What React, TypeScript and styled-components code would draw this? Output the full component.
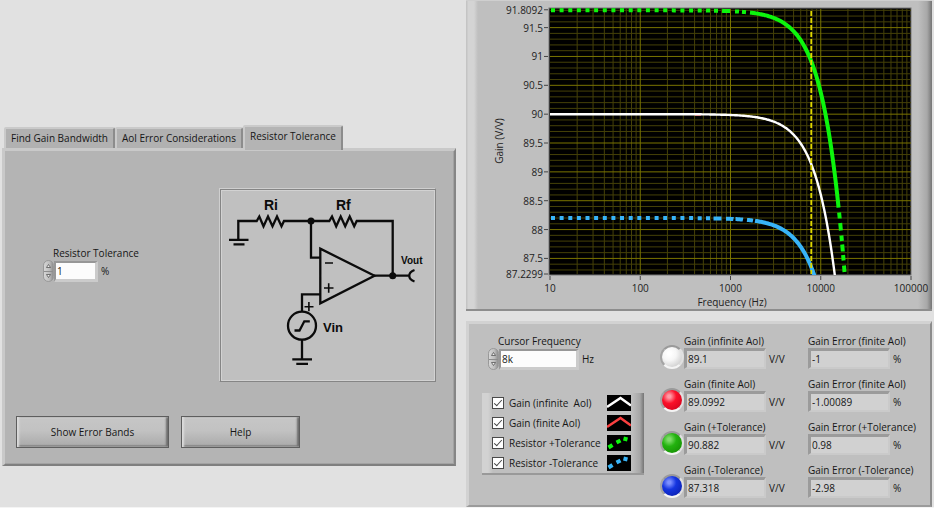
import React, { useState } from 'react';
import styled, { createGlobalStyle, css } from 'styled-components';

const FONT = '"Open Sans", "Noto Sans", sans-serif';

const GlobalStyle = createGlobalStyle`
  *, *::before, *::after { box-sizing: border-box; }
  body { margin: 0; background: #e1e1e1; }
  body, button, input { font: 10px/14px ${FONT}; color: #161616; }
  svg { display: block; }
`;

const Page = styled.main`
  display: grid;
  grid-template-columns: minmax(0, 454fr) minmax(0, 466fr);
  column-gap: 10px;
  padding: 0 2px;
  border-bottom: 1px solid #f4f4f4;
`;

const LeftColumn = styled.section`
  display: flex;
  flex-direction: column;
  padding-top: 125px;
`;

const RightColumn = styled.section`
  display: flex;
  flex-direction: column;
  gap: 10px;
`;

/* ---------- tab control ---------- */

const TabList = styled.div`
  display: flex;
  align-items: flex-end;
  padding-left: 2px;
`;

const Tab = styled.button<{ $active: boolean }>`
  height: 21px;
  padding: 0 5px 2px;
  white-space: nowrap;
  border: solid;
  border-width: 2px 2px 0 2px;
  border-color: #cacaca #8c8c8c transparent #cacaca;
  border-radius: 2px 2px 0 0;
  background: #b1b1b1;
  ${(p) =>
    p.$active &&
    css`
      height: 25px;
      margin-bottom: -2px;
      padding-bottom: 5px;
      background: #b4b4b4;
      position: relative;
    `}
`;

const TabPanel = styled.div`
  display: flex;
  flex-direction: column;
  gap: 34px;
  padding: 37px 18px 16px 11px;
  background: #b4b4b4;
  border: solid;
  border-width: 3px 2px 2px 3px;
  border-color: #c9c9c9 #868686 #7f7f7f #c9c9c9;
  box-shadow: inset -1px -1px 0 #a2a2a2;
`;

const PanelBody = styled.div`
  display: flex;
  justify-content: space-between;
`;

const ToleranceField = styled.div`
  padding: 58px 0 0 27px;
`;

const ButtonRow = styled.div`
  display: flex;
  gap: 12px;
`;

const PushButton = styled.button<{ $wide?: boolean }>`
  width: ${(p) => (p.$wide ? 153 : 119)}px;
  height: 32px;
  border: 1px solid #5e5e5e;
  border-radius: 0;
  background: linear-gradient(#c6c6c6, #c2c2c2 45%, #a9a9a9);
  box-shadow: inset 2px 0 2px #dcdcdc, inset -2px 0 2px #6d6d6d,
    inset 0 2px 1px #cecece, inset 0 -2px 1px #858585;
`;

const CircuitFrame = styled.figure`
  flex: none;
  width: 217px;
  margin: 0;
  border: 1px solid;
  border-color: #cfcfcf #858585 #858585 #cfcfcf;
  background: #c0c0c0;
  box-shadow: inset 1px 1px 0 #858585, inset -1px -1px 0 #d2d2d2,
    inset 2px 2px 0 #d2d2d2;
  padding: 1px;
`;

/* ---------- numeric controls ---------- */

const FieldCaption = styled.label<{ $indent?: boolean }>`
  display: block;
  padding-left: ${(p) => (p.$indent ? 10 : 0)}px;
  white-space: pre;
`;

const FieldRow = styled.div`
  display: flex;
  align-items: center;
`;

const Unit = styled.span`
  margin-left: 3px;
`;

const SpinnerBox = styled.span`
  display: flex;
  flex-direction: column;
  width: 11px;
  height: 22px;
  border-radius: 6px;
  overflow: hidden;
  border: 1px solid #999;
  background: linear-gradient(90deg, #d6d6d6, #bdbdbd 60%, #8f8f8f);
`;

const SpinButton = styled.button`
  display: flex;
  flex: 1;
  align-items: center;
  justify-content: center;
  padding: 0;
  border: 0;
  background: none;
  & + & {
    border-top: 1px solid #8d8d8d;
  }
`;

const NumberInput = styled.input<{ $width: number }>`
  width: ${(p) => p.$width}px;
  height: 21px;
  padding: 0 1px;
  border: solid;
  border-width: 2px 3px 3px 2px;
  border-color: #979797 #cbcbcb #cbcbcb #979797;
  background: #fcfcfc;
  outline: 0;
`;

const Readout = styled.input`
  width: 82px;
  height: 21px;
  padding: 0 1px;
  border: solid;
  border-width: 3px 2px 2px 3px;
  border-color: #9b9b9b #cacaca #cacaca #9b9b9b;
  background: #d1d1d1;
  outline: 0;
`;

/* ---------- graph ---------- */

const GraphPanel = styled.div`
  padding: 2px 0 1px;
  background: linear-gradient(
    90deg,
    #c4c4c4 0 1px,
    #d4d4d4 2px 8px,
    #bfbfbf 12px calc(100% - 14px),
    #a8a8a8 calc(100% - 5px),
    #757575 100%
  );
  border-top: 1px solid #cfcfcf;
  border-bottom: 2px solid #8d8d8d;
  & svg {
    width: 100%;
    height: auto;
  }
`;

/* ---------- measurements ---------- */

const MeasurePanel = styled.div`
  display: flex;
  justify-content: space-between;
  padding: 10px 14px 7px 13px;
  background: #bfbfbf;
  border: solid;
  border-width: 3px 2px 2px 3px;
  border-color: #d2d2d2 #8c8c8c #9b9b9b #d2d2d2;
`;

const ControlColumn = styled.div`
  display: flex;
  flex-direction: column;
  gap: 23px;
`;

const CursorField = styled.div`
  padding-left: 6px;
`;

const Legend = styled.div`
  display: flex;
  flex-direction: column;
  width: 162px;
  padding: 0 13px 0 10px;
  border-bottom: 2px solid #999;
  background: linear-gradient(
    90deg,
    #d2d2d2 0 6px,
    #bfbfbf 11px calc(100% - 12px),
    #a6a6a6 calc(100% - 4px),
    #757575 100%
  );
`;

const LegendRow = styled.label`
  display: flex;
  align-items: center;
  gap: 5px;
  height: 20px;
  white-space: pre;
  & svg {
    margin-left: auto;
  }
`;

const CheckBox = styled.input`
  appearance: none;
  display: flex;
  justify-content: center;
  width: 12px;
  height: 12px;
  margin: 0;
  border: 1px solid #4a4a4a;
  background: #fff;
  &:checked::after {
    content: '';
    width: 4px;
    height: 8px;
    border: solid #444;
    border-width: 0 1px 1px 0;
    transform: rotate(42deg);
  }
`;

const ReadoutGrid = styled.div`
  display: grid;
  grid-template-columns: auto auto auto;
  align-content: start;
  row-gap: 8px;
`;

const LampCell = styled.div`
  display: flex;
  align-items: flex-end;
`;

const Lamp = styled.span<{ $light: string; $color: string; $dark: string }>`
  width: 24px;
  height: 24px;
  border-radius: 50%;
  border: 2px solid;
  border-color: #9a9a9a #e0e0e0 #f4f4f4 #a4a4a4;
  background: radial-gradient(
    circle at 36% 32%,
    ${(p) => p.$light} 0 8%,
    ${(p) => p.$color} 38%,
    ${(p) => p.$dark} 100%
  );
`;

const ReadoutCell = styled.div`
  width: 124px;
`;

/* ---------- data ---------- */

const TABS = ['Find Gain Bandwidth', 'Aol Error Considerations', 'Resistor Tolerance'];

const READINGS = [
  { id: 'inf', name: '(infinite Aol)', errName: '(finite Aol)', gain: '89.1', error: '-1', lamp: ['#ffffff', '#f6f6f6', '#bdbdbd'] },
  { id: 'fin', name: '(finite Aol)', errName: '(finite Aol)', gain: '89.0992', error: '-1.00089', lamp: ['#ff9aa5', '#fb1029', '#c4001a'] },
  { id: 'plus', name: '(+Tolerance)', errName: '(+Tolerance)', gain: '90.882', error: '0.98', lamp: ['#7fdc6a', '#23b30f', '#128400'] },
  { id: 'minus', name: '(-Tolerance)', errName: '(-Tolerance)', gain: '87.318', error: '-2.98', lamp: ['#7d90ff', '#1535e0', '#0719a0'] },
];

const TRACES = [
  { label: 'Gain (infinite  Aol)', color: '#ffffff', dots: false },
  { label: 'Gain (finite Aol)', color: '#fb4040', dots: false },
  { label: 'Resistor +Tolerance', color: '#0cf50c', dots: true },
  { label: 'Resistor -Tolerance', color: '#38b4f8', dots: true },
];

/* ---------- drawings ---------- */

const W = 466;
const PLOT = { left: 84, right: 445, top: 6, bottom: 271 };
const CORNER_HZ = 56140;
const xOf = (hz: number) => PLOT.left + (Math.log10(hz) - 1) * 90.25;
const hzOf = (x: number) => Math.pow(10, (x - PLOT.left) / 90.25 + 1);
const yOf = (gain: number) => PLOT.bottom - (gain - 87.2299) * 57.7;
const yAt = (dc: number, x: number) => yOf(dc / Math.sqrt(1 + Math.pow(hzOf(x) / CORNER_HZ, 2)));

function curve(dc: number, from: number, to: number, step = 1) {
  const pts: string[] = [];
  for (let x = from; x < to; x += step) pts.push(`${x.toFixed(1)} ${yAt(dc, x).toFixed(1)}`);
  pts.push(`${to.toFixed(1)} ${yAt(dc, to).toFixed(1)}`);
  return 'M' + pts.join('L');
}

function dotted(dc: number, extra: [number, number][]) {
  let d = '';
  for (let x = PLOT.left + 1; x < 235; x += 8.63) d += curve(dc, x, x + 4);
  return d + extra.map(([a, b]) => curve(dc, a, b)).join('');
}

const PLUS_PATH = (() => {
  let d = dotted(91.8, [[240, 244], [248, 252], [256, 264], [269, 273], [276, 280], [284, 372.6]]);
  const marks = [202.5, 208.5, 213.5, 219.5, 224, 231.5, 236.5, 242, 245.5, 252.5, 256, 261.5, 266.5, 273];
  for (let i = 0; i < marks.length; i += 2) {
    const xs = [marks[i] - 4, marks[i + 1] - 4].map((y) => {
      const g = 87.2299 + (PLOT.bottom - y) / 57.7;
      return xOf(CORNER_HZ * Math.sqrt(Math.pow(91.8 / g, 2) - 1));
    });
    d += curve(91.8, xs[0], xs[1], 0.3);
  }
  return d;
})();
const MINUS_PATH = dotted(88.2, [[240, 244], [247.5, 255.5], [260, 267.5], [269.5, 277], [281, 287], [289, 351]]);

const Y_TICKS = [91.8092, 91.5, 91, 90.5, 90, 89.5, 89, 88.5, 88, 87.5, 87.2299];
const X_TICKS = [10, 100, 1000, 10000, 100000];

function Graph() {
  const minorY: number[] = [];
  for (let i = 873; i <= 918; i++) if (i % 5 !== 0) minorY.push(i / 10);
  const minorX: number[] = [];
  for (let d = 10; d < 100000; d *= 10) for (let k = 2; k < 10; k++) minorX.push(d * k);
  return (
    <svg viewBox={`0 0 ${W} 305`} fontFamily={FONT} fontSize="10" fill="#222" role="img" aria-label="Gain against frequency">
      <clipPath id="plot">
        <rect x={PLOT.left} y={PLOT.top - 1} width={PLOT.right - PLOT.left} height={PLOT.bottom - PLOT.top + 2} />
      </clipPath>
      <rect x={PLOT.left - 1} y={PLOT.top - 1} width={PLOT.right - PLOT.left + 1} height={PLOT.bottom - PLOT.top + 2} fill="#000" stroke="#777" />
      <g clipPath="url(#plot)" fill="none">
        <g stroke="#454108">
          {minorY.map((v) => <path key={v} d={`M${PLOT.left} ${yOf(v)}H${PLOT.right}`} />)}
          {minorX.map((v) => <path key={v} d={`M${xOf(v)} ${PLOT.top}V${PLOT.bottom}`} />)}
        </g>
        <g stroke="#7a7400">
          {Y_TICKS.slice(1, -1).map((v) => <path key={v} d={`M${PLOT.left} ${yOf(v)}H${PLOT.right}`} />)}
          {X_TICKS.slice(1, -1).map((v) => <path key={v} d={`M${xOf(v)} ${PLOT.top}V${PLOT.bottom}`} />)}
        </g>
        <path d={curve(89.99, 229, 235)} stroke="#c33" strokeWidth="2" />
        <path d={curve(90, PLOT.left, 371)} stroke="#fff" strokeWidth="2.4" />
        <path d={PLUS_PATH} stroke="#0cf50c" strokeWidth="4" />
        <path d={MINUS_PATH} stroke="#38b4f8" strokeWidth="4" />
        <path d={`M${xOf(7850)} ${PLOT.top + 2}V${PLOT.bottom}`} stroke="#e0d800" strokeWidth="1.8" strokeDasharray="5 2" />
      </g>
      {Y_TICKS.map((v) => (
        <g key={v}>
          <path d={`M${PLOT.left - 6} ${yOf(v)}h4`} stroke="#444" />
          <text x={PLOT.left - 7} y={yOf(v) + 4} textAnchor="end">{v}</text>
        </g>
      ))}
      {X_TICKS.map((v) => (
        <g key={v}>
          <path d={`M${xOf(v)} ${PLOT.bottom + 2}v4`} stroke="#444" />
          <text x={xOf(v)} y={PLOT.bottom + 18} textAnchor="middle">{v}</text>
        </g>
      ))}
      <text x="266" y="303" textAnchor="middle">Frequency (Hz)</text>
      <text x="-138" y="37" textAnchor="middle" transform="rotate(-90)">Gain (V/V)</text>
    </svg>
  );
}

function Circuit() {
  return (
    <svg viewBox="0 0 213 190" fill="none" stroke="#0b0b0b" strokeWidth="2.3" role="img" aria-label="Non-inverting amplifier">
      <path d="M17.3 50V31H35.7L38.3 26.5 42.5 36.3 47 26.5 51.5 36.3 56 26.5 60.5 36.3 63 31H108.3L111 26.5 115.2 36.3 119.7 26.5 124.2 36.3 128.7 26.5 133.2 36.3 135.7 31H171.7V85.7" />
      <path d="M8 49.8H27.5M12.5 54.3H23.5M90 31V67.7H99.3" />
      <path d="M99.3 58.7V113.3L153.5 85.7Z" />
      <path d="M153 85.7H188.5M193.5 80C186.5 82.5 186.5 89 193.5 91.5" />
      <path d="M99.3 104.3H81V121.7M81 150V169.5M71.3 169.3H91M75.3 173.8H87" />
      <circle cx="81" cy="135.7" r="14" />
      <path d="M73.5 140.5H78.5L83.3 131.3H88.8" />
      <path d="M104 73H112M103 98H112.5M107.7 93.3V102.7M83.5 116.7H92.5M87.9 112V121.2" strokeWidth="1.6" />
      <g fill="#0b0b0b" stroke="none">
        <circle cx="90" cy="31" r="3.5" />
        <circle cx="171.7" cy="85.7" r="3.5" />
        <g fontFamily='"Liberation Sans", sans-serif' fontWeight="700">
          <text x="43" y="20" fontSize="14">Ri</text>
          <text x="115" y="20" fontSize="14">Rf</text>
          <text x="180" y="74" fontSize="10">Vout</text>
          <text x="102" y="142" fontSize="13">Vin</text>
        </g>
      </g>
    </svg>
  );
}

function Swatch({ color, dots }: { color: string; dots: boolean }) {
  return (
    <svg width="24" height="16" viewBox="0 0 24 16">
      <rect width="24" height="16" fill="#000" />
      {dots ? (
        <path d="M1.5 12.5L5.5 10M9.5 7.5L13.5 5.5M16.5 3.5L20.5 4.5" stroke={color} strokeWidth="4" />
      ) : (
        <path d="M0 12L13.5 3L24 10.5" fill="none" stroke={color} strokeWidth="2.5" />
      )}
    </svg>
  );
}

function Spinner({ name }: { name: string }) {
  return (
    <SpinnerBox>
      <SpinButton type="button" aria-label={`Increase ${name}`}>
        <svg width="5" height="4" viewBox="0 0 5 4"><path d="M.5 3.5L2.5 .5L4.5 3.5Z" fill="#eee" stroke="#555" strokeWidth=".8" /></svg>
      </SpinButton>
      <SpinButton type="button" aria-label={`Decrease ${name}`}>
        <svg width="5" height="4" viewBox="0 0 5 4"><path d="M.5 .5L2.5 3.5L4.5 .5Z" fill="#eee" stroke="#555" strokeWidth=".8" /></svg>
      </SpinButton>
    </SpinnerBox>
  );
}

export default function App() {
  const [active, setActive] = useState(2);
  return (
    <>
      <GlobalStyle />
      <Page>
        <LeftColumn>
          <TabList role="tablist">
            {TABS.map((t, i) => (
              <Tab key={t} type="button" role="tab" aria-selected={i === active} $active={i === active} onClick={() => setActive(i)}>
                {t}
              </Tab>
            ))}
          </TabList>
          <TabPanel role="tabpanel">
            <PanelBody>
              <ToleranceField>
                <FieldCaption $indent htmlFor="tolerance">Resistor Tolerance</FieldCaption>
                <FieldRow>
                  <Spinner name="resistor tolerance" />
                  <NumberInput id="tolerance" $width={44} defaultValue="1" />
                  <Unit>%</Unit>
                </FieldRow>
              </ToleranceField>
              <CircuitFrame>
                <Circuit />
              </CircuitFrame>
            </PanelBody>
            <ButtonRow>
              <PushButton type="button" $wide>Show Error Bands</PushButton>
              <PushButton type="button">Help</PushButton>
            </ButtonRow>
          </TabPanel>
        </LeftColumn>

        <RightColumn>
          <GraphPanel>
            <Graph />
          </GraphPanel>
          <MeasurePanel>
            <ControlColumn>
              <CursorField>
                <FieldCaption $indent htmlFor="cursor">Cursor Frequency</FieldCaption>
                <FieldRow>
                  <Spinner name="cursor frequency" />
                  <NumberInput id="cursor" $width={80} defaultValue="8k" />
                  <Unit>Hz</Unit>
                </FieldRow>
              </CursorField>
              <Legend role="group" aria-label="Traces">
                {TRACES.map((t) => (
                  <LegendRow key={t.label}>
                    <CheckBox type="checkbox" defaultChecked />
                    {t.label}
                    <Swatch color={t.color} dots={t.dots} />
                  </LegendRow>
                ))}
              </Legend>
            </ControlColumn>
            <ReadoutGrid>
              {READINGS.map((r) => (
                <React.Fragment key={r.id}>
                  <LampCell>
                    <Lamp $light={r.lamp[0]} $color={r.lamp[1]} $dark={r.lamp[2]} />
                  </LampCell>
                  <ReadoutCell>
                    <FieldCaption htmlFor={`g-${r.id}`}>Gain {r.name}</FieldCaption>
                    <FieldRow>
                      <Readout id={`g-${r.id}`} readOnly value={r.gain} />
                      <Unit>V/V</Unit>
                    </FieldRow>
                  </ReadoutCell>
                  <div>
                    <FieldCaption htmlFor={`e-${r.id}`}>Gain Error {r.errName}</FieldCaption>
                    <FieldRow>
                      <Readout id={`e-${r.id}`} readOnly value={r.error} />
                      <Unit>%</Unit>
                    </FieldRow>
                  </div>
                </React.Fragment>
              ))}
            </ReadoutGrid>
          </MeasurePanel>
        </RightColumn>
      </Page>
    </>
  );
}
